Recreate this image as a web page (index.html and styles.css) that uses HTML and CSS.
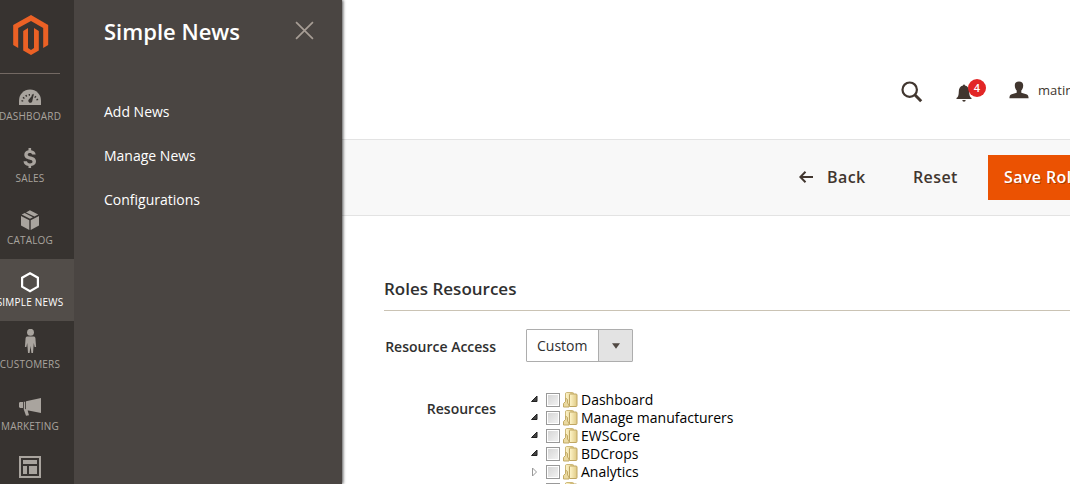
FILE: index.html
```
<!DOCTYPE html>
<html lang="en">
<head>
<meta charset="utf-8">
<title>Roles Resources</title>
<link rel="stylesheet" href="styles.css">
</head>
<body>
<div class="app">
  <aside class="sidebar">
    <div class="logo">
      <svg width="36" height="41" viewBox="0 0 36 41" fill="#eb6125"><path d="M18 0 35.200 10v20L30.200 33V13L18 6 5.200 13v20L.200 30V10z"/><path d="M15 13v20l3 2 3-2V13l4.800 3v19.500L18 40l-7.800-4.500V16z"/></svg>
    </div>
    <nav class="menu">
      <a class="menu-item"><svg class="icon" viewBox="0 0 24 24"><path d="M1 21v-4.500a11 11 0 0 1 22 0V21z"/><path d="M4.200 17.500A7.900 7.900 0 0 1 19.800 17.500" fill="none" stroke="#373330" stroke-width="1.800" stroke-dasharray="1.300 1.900"/><path d="M16 9.500l-1.700 7.500a2 2 0 1 1-3.500-1.500z" fill="#373330"/></svg><span>Dashboard</span></a>
      <a class="menu-item"><svg class="icon" viewBox="0 0 24 24"><path d="M10.500 2h2.600V4.300c2.500.4 4.200 1.700 4.600 4.200h-3.400C14 7.400 13.200 6.900 12 6.900c-1.500 0-2.300.6-2.300 1.600 0 1.200 1 1.500 3.200 2.100 2.900.8 5.100 1.800 5.100 4.900 0 2.600-1.900 4.200-4.900 4.600V22h-2.600v-1.900c-3-.4-4.700-2-5-4.800h3.500c.3 1.500 1.200 2.100 2.900 2.100 1.700 0 2.600-.6 2.600-1.700 0-1.200-.9-1.600-3.200-2.200-2.900-.8-5-1.800-5-4.700 0-2.400 1.600-4.100 4.200-4.500z"/></svg><span>Sales</span></a>
      <a class="menu-item"><svg class="icon" viewBox="0 0 24 24"><path d="M3 8l8.300 4.200V22L3 17.500zM12.700 12.200 21 8v9.500L12.700 22zM3.700 6.600l3-1.500 8.200 4.200-2.900 1.500zM8 4.400 11.900 2.300l8.300 4.300-3.800 2z"/></svg><span>Catalog</span></a>
      <a class="menu-item active"><svg class="icon" viewBox="0 0 24 24"><path d="M12 3.200 19.900 7.700v9L12 21.200l-7.900-4.500v-9z" fill="none" stroke="#fff" stroke-width="2.200"/></svg><span>Simple News</span></a>
      <a class="menu-item"><svg class="icon customers" viewBox="0 0 24 24"><circle cx="12.500" cy="3.300" r="3.500"/><path d="M9 7.500h7q1.200 0 1.400 1.500l.7 9h-1.500L15.800 14l-.8 10h-1.600l-.9-7-.9 7H10L9.200 14l-.8 4H6.900l.7-9q.2-1.500 1.400-1.500z"/></svg><span>Customers</span></a>
      <a class="menu-item"><svg class="icon" viewBox="0 0 24 24"><path d="M23 4v15l-15-3V7.300zM1 8.700l1-.7h3v6H2l-1-1zM5.800 7.800H7.200V15l2.200.7 1.600 5.600-3 .5-2.200-6.200z"/></svg><span>Marketing</span></a>
      <a class="menu-item"><svg class="icon layout" viewBox="0 0 24 24"><path d="M2 2h20v20H2z" fill="none" stroke="#a9a49e" stroke-width="2"/><path d="M5 5h14v4H5zM5 11h4v8H5zM11 11h8v8h-8z"/></svg></a>
    </nav>
  </aside>
  <section class="flyout">
    <header class="flyout-head"><h2>Simple News</h2>
      <svg class="close" viewBox="0 0 18 18"><path d="M1 1l16 16M17 1 1 17" stroke="#a79d95" stroke-width="1.600" fill="none"/></svg>
    </header>
    <a>Add News</a><a>Manage News</a><a>Configurations</a>
  </section>
  <main class="page">
    <header class="topbar">
      <svg class="search" viewBox="0 0 22 22" fill="none" stroke="#41362f"><circle cx="8.700" cy="8.700" r="7.200" stroke-width="2.200"/><path d="M13.800 13.800 20.200 20.200" stroke-width="3"/></svg>
      <div class="bell"><svg width="16" height="18" viewBox="0 0 16 18" fill="#41362f"><path d="M7 1.500a1 1 0 0 1 2 0c3 .7 4.200 3 4.200 6 0 4 .8 5.500 2.300 6.500v1H.500v-1c1.500-1 2.300-2.500 2.300-6.500 0-3 1.200-5.300 4.200-6zM6.300 16h3.400a1.700 1.700 0 0 1-3.400 0z"/></svg><span class="badge">4</span></div>
      <div class="user"><svg width="20" height="18" viewBox="0 0 20 18" fill="#41362f"><path d="M10 .500c2.700 0 4.200 1.300 4.200 3.800 0 3-1 4.200-1.900 5.200v2.200l5 1.600c1.600.6 2.200 1.600 2.300 4H.400c.1-2.400.7-3.400 2.300-4l5-1.600V9.500c-.9-1-1.900-2.200-1.900-5.200 0-2.500 1.500-3.800 4.200-3.800z"/></svg><span>matin</span></div>
    </header>
    <div class="actions">
      <a class="back"><svg width="14" height="12" viewBox="0 0 14 12" fill="none" stroke="#41362f" stroke-width="2"><path d="M14 6H1.500M6.500 .700 1.300 6l5.200 5.300"/></svg>Back</a>
      <a class="reset">Reset</a>
      <button class="save">Save Role</button>
    </div>
    <div class="content">
      <h3>Roles Resources</h3>
      <div class="field"><label>Resource Access</label>
        <div class="select"><span>Custom</span><i><svg width="8" height="6" viewBox="0 0 8 6"><path d="M0 .300h8L4 5.700z" fill="#514943"/></svg></i></div>
      </div>
      <div class="field resources"><label>Resources</label>
        <ul class="tree">
          <li><svg class="arrow" viewBox="0 0 8 8"><path d="M7 1v5.500H1.500z" fill="#444" stroke="#222"/></svg><i class="check"></i><svg class="folder"><use href="#folder"/></svg>Dashboard</li>
          <li><svg class="arrow" viewBox="0 0 8 8"><path d="M7 1v5.500H1.500z" fill="#444" stroke="#222"/></svg><i class="check"></i><svg class="folder"><use href="#folder"/></svg>Manage manufacturers</li>
          <li><svg class="arrow" viewBox="0 0 8 8"><path d="M7 1v5.500H1.500z" fill="#444" stroke="#222"/></svg><i class="check"></i><svg class="folder"><use href="#folder"/></svg>EWSCore</li>
          <li><svg class="arrow" viewBox="0 0 8 8"><path d="M7 1v5.500H1.500z" fill="#444" stroke="#222"/></svg><i class="check"></i><svg class="folder"><use href="#folder"/></svg>BDCrops</li>
          <li><svg class="arrow closed" viewBox="0 0 8 10"><path d="M2.500 1v8l4-4z" fill="#fff" stroke="#999"/></svg><i class="check"></i><svg class="folder"><use href="#folder"/></svg>Analytics</li>
          <li><svg class="arrow closed"></svg><i class="check"></i><svg class="folder"><use href="#folder"/></svg></li>
        </ul>
      </div>
    </div>
  </main>
</div>
<svg class="defs"><defs>
  <linearGradient id="gold"><stop offset="0" stop-color="#fff6cc"/><stop offset="1" stop-color="#dfc983"/></linearGradient>
  <symbol id="folder" viewBox="0 0 16 16"><path d="M3.500 2q0-1.500 1-1.500h6q1 0 1 1V13h-8z" fill="url(#gold)" stroke="#cdb878"/><path d="M1.500 15v-3.500l2-2V6l2 1.500v3.500L7 13v2z" fill="#ead9a0" stroke="#c3aa65"/><path d="M7.500 3q0-1 1-1h5.500q1 0 1 1v10.500q0 1-1 1H7.500z" fill="url(#gold)" stroke="#bfa662"/></symbol>
</defs></svg>
</body>
</html>
```
FILE: styles.css
```
* { box-sizing: border-box; }
body { margin: 0; overflow: hidden; background: #fff; color: #303030; font-family: "Open Sans", sans-serif; font-size: 14px; }
h2, h3, ul { margin: 0; padding: 0; }
.defs { position: absolute; width: 0; height: 0; }
.app { display: flex; width: 1070px; height: 484px; overflow: hidden; }

.sidebar { flex: none; width: 88px; margin-left: -14px; background: #373330; }
.logo { height: 74px; margin: 0 14px; padding: 15px 0 0 13px; border-bottom: 1px solid #736963; }
.logo svg { display: block; }
.menu-item { display: flex; flex-direction: column; align-items: center; height: 62px; padding-top: 11px; color: #a9a49e; font-size: 10px; line-height: 14px; letter-spacing: .2px; text-transform: uppercase; white-space: nowrap; }
.menu { margin-top: -1px; }
.icon { display: block; flex: none; width: 24px; height: 24px; margin-bottom: 1px; fill: #a9a49e; }
.icon.customers { margin: -3px 0 4px; }
.icon.layout { margin-top: -1px; }
.active { background: #524d49; color: #fff; }

.flyout { flex: none; width: 268px; padding-left: 30px; background: #4a4542; box-shadow: 1px 0 3px rgba(0,0,0,.7); clip-path: inset(0 -5px 0 0); z-index: 1; color: #fff; }
.flyout-head { display: flex; justify-content: space-between; height: 90px; padding: 15px 28px 0 0; }
.flyout h2 { font-size: 22px; line-height: 32px; font-weight: 600; }
.close { width: 19px; height: 19px; margin-top: 6px; }
.flyout a { display: block; height: 44px; line-height: 44px; }

.page { flex: 1; min-width: 0; overflow: hidden; }
.topbar { display: flex; height: 139px; padding: 81px 0 0 559px; }
.search { flex: none; width: 22px; height: 22px; }
.bell { position: relative; flex: none; width: 16px; margin: 3px 0 0 33px; }
.bell svg, .user svg { display: block; flex: none; }
.badge { position: absolute; left: 12px; top: -5px; width: 18px; height: 18px; border-radius: 50%; background: #e22626; color: #fff; font-size: 11px; line-height: 18px; font-weight: 600; text-align: center; }
.user { display: flex; gap: 9px; margin-left: 37px; font-size: 13px; line-height: 18px; color: #41362f; }
.actions { display: flex; align-items: center; height: 77px; padding-left: 457px; background: #f8f8f8; border: solid #e3e3e3; border-width: 1px 0; color: #41362f; font-size: 16px; font-weight: 600; letter-spacing: .4px; white-space: nowrap; }
.back { display: flex; flex: none; align-items: center; gap: 14px; width: 114px; padding-bottom: 2px; }
.reset { flex: none; width: 75px; padding-bottom: 2px; }
.save { flex: none; width: 120px; height: 45px; padding: 0 0 2px 16px; border: 0; background: #eb5202; color: #fff; font: inherit; letter-spacing: inherit; text-align: left; text-shadow: 1px 1px 0 rgba(0,0,0,.3); }

.content { padding: 59px 0 0 42px; }
.content h3 { height: 36px; border-bottom: 1px solid #cac3b4; font-size: 17px; line-height: 27px; font-weight: 600; }
.field { display: flex; margin-top: 18px; }
.field label { flex: none; width: 112px; margin-right: 30px; line-height: 35px; font-weight: 600; text-align: right; }
.select { display: flex; width: 107px; height: 33px; border: 1px solid #adadad; border-radius: 1px; line-height: 31px; }
.select span { width: 71px; padding-left: 10px; }
.select i { display: flex; flex: 1; align-items: center; justify-content: center; border-left: 1px solid #adadad; background: #e3e3e3; }
.resources { margin-top: 27px; }
.tree { list-style: none; color: #000; }
.tree li { display: flex; align-items: center; height: 18px; line-height: 18px; white-space: nowrap; }
.arrow { width: 8px; height: 8px; margin: 0 8px 2px 4px; }
.arrow.closed { height: 10px; margin-bottom: 0; }
.check { width: 14px; height: 14px; margin-right: 2px; border: 1px solid #999; background: linear-gradient(135deg, #d3d3d3, #f4f4f4); box-shadow: inset 0 0 0 1px #fff; }
.folder { width: 16px; height: 16px; margin-right: 3px; }
```
